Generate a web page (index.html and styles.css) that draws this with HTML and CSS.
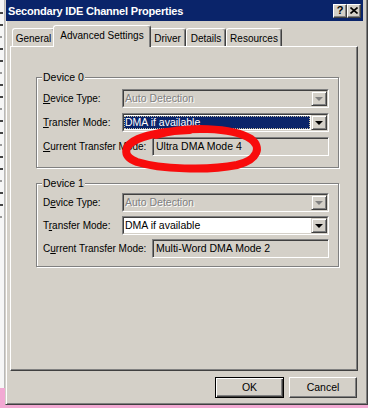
FILE: index.html
```html
<!DOCTYPE html>
<html lang="en">
<head>
    <meta charset="UTF-8">
    <title>Secondary IDE Channel Properties</title>
    <link rel="stylesheet" href="styles.css">
</head>
<body>
    <div class="screen">
        <!-- window behind the dialog -->
        <div class="behind">
            <span class="mark"></span><span class="mark"></span><span class="mark"></span>
            <span class="mark"></span><span class="mark"></span><span class="mark"></span>
            <span class="mark"></span><span class="mark"></span><span class="mark"></span>
            <span class="mark"></span><span class="mark"></span><span class="mark"></span>
            <span class="mark"></span><span class="mark"></span><span class="mark"></span>
            <span class="mark"></span><span class="mark"></span><span class="mark"></span>
        </div>

        <div class="dialog">
            <div class="titlebar">
                <span class="title">Secondary IDE Channel Properties</span>
                <div class="title-btns">
                    <span class="tbtn">?</span>
                    <span class="tbtn">
                        <svg width="8" height="7" viewBox="0 0 8 7"><path d="M0.5 0.5 L7.5 6.5 M7.5 0.5 L0.5 6.5" stroke="#000" stroke-width="1.6"/></svg>
                    </span>
                </div>
            </div>

            <div class="tabs">
                <div class="tab tab-general">General</div>
                <div class="tab tab-advanced active">Advanced Settings</div>
                <div class="tab tab-driver">Driver</div>
                <div class="tab tab-details">Details</div>
                <div class="tab tab-resources">Resources</div>
            </div>

            <div class="panel">
                <!-- Device 0 -->
                <div class="group">
                    <div class="legend">Device 0</div>
                    <div class="row">
                        <span class="label"><u>D</u>evice Type:</span>
                        <div class="combo disabled">
                            <div class="combo-in">
                                <span class="field">Auto Detection</span>
                                <span class="drop"><span class="arrow"></span></span>
                            </div>
                        </div>
                    </div>
                    <div class="row">
                        <span class="label"><u>T</u>ransfer Mode:</span>
                        <div class="combo">
                            <div class="combo-in">
                                <span class="field selected">DMA if available</span>
                                <span class="drop"><span class="arrow"></span></span>
                            </div>
                        </div>
                    </div>
                    <div class="row">
                        <span class="label"><u>C</u>urrent Transfer Mode:</span>
                        <div class="readonly">Ultra DMA Mode 4</div>
                    </div>
                </div>

                <!-- Device 1 -->
                <div class="group group-second">
                    <div class="legend">Device 1</div>
                    <div class="row">
                        <span class="label">D<u>e</u>vice Type:</span>
                        <div class="combo disabled">
                            <div class="combo-in">
                                <span class="field">Auto Detection</span>
                                <span class="drop"><span class="arrow"></span></span>
                            </div>
                        </div>
                    </div>
                    <div class="row">
                        <span class="label">T<u>r</u>ansfer Mode:</span>
                        <div class="combo">
                            <div class="combo-in">
                                <span class="field">DMA if available</span>
                                <span class="drop"><span class="arrow"></span></span>
                            </div>
                        </div>
                    </div>
                    <div class="row">
                        <span class="label">C<u>u</u>rrent Transfer Mode:</span>
                        <div class="readonly">Multi-Word DMA Mode 2</div>
                    </div>
                </div>
            </div>

            <div class="buttons">
                <div class="btn default">OK</div>
                <div class="btn">Cancel</div>
            </div>
        </div>

        <!-- red marker drawn over the screenshot -->
        <svg class="scribble" width="368" height="408" viewBox="0 0 368 408">
            <path d="M156 135 C186 126 232 127 251 139 C262 147 258 160 237 165 C207 171 160 169 137 162 C121 156 124 145 138 139 C150 134 168 131 190 130"
                  fill="none" stroke="#f80c0c" stroke-width="8" stroke-linecap="round" stroke-linejoin="round"/>
        </svg>
    </div>
</body>
</html>
```

FILE: styles.css
```css
* {
    margin: 0;
    padding: 0;
    box-sizing: border-box;
}

body {
    background-color: #f2a9d3;
    font-family: "Liberation Sans", Arial, sans-serif;
    font-size: 10px;
    color: #000;
}

.screen {
    position: relative;
    display: flex;
    width: 368px;
    height: 408px;
    overflow: hidden;
    white-space: nowrap;
}

/* Window behind */
.behind {
    width: 5px;
    height: 388px;
    background-color: #f6f6f6;
    border-right: 1px solid #b8b8b8;
    display: flex;
    flex-direction: column;
    gap: 10px;
    padding-top: 12px;
}

.mark {
    width: 3px;
    height: 2px;
    background-color: #444;
}

.mark:nth-child(3n) {
    background-color: #999;
    width: 2px;
}

/* Dialog frame */
.dialog {
    width: 363px;
    height: 405px;
    background-color: #d4d0c8;
    border-left: 1px solid #d4d0c8;
    border-right: 1px solid #404040;
    border-bottom: 1px solid #404040;
    box-shadow: inset 1px 0 #fff, inset -1px -1px #808080;
    padding-right: 4px;
    display: flex;
    flex-direction: column;
}

.titlebar {
    height: 21px;
    background-color: #0a246a;
    display: flex;
    align-items: center;
    justify-content: space-between;
    padding: 0 2px 0 2px;
}

.title {
    color: #fff;
    font-weight: bold;
    font-size: 11px;
    letter-spacing: -0.2px;
}

.title-btns {
    display: flex;
}

.tbtn {
    width: 14px;
    height: 14px;
    background-color: #d4d0c8;
    border: 1px solid;
    border-color: #fff #404040 #404040 #fff;
    box-shadow: inset -1px -1px #808080;
    display: flex;
    align-items: center;
    justify-content: center;
    font-weight: bold;
    font-size: 11px;
    line-height: 1;
}

/* Tabs */
.tabs {
    display: flex;
    align-items: flex-end;
    height: 25px;
    padding-left: 6px;
}

.tab {
    height: 18px;
    border-top: 1px solid #fff;
    border-left: 1px solid #fff;
    border-right: 1px solid #404040;
    box-shadow: inset -1px 0 #808080;
    border-radius: 3px 3px 0 0;
    text-align: center;
    line-height: 17px;
    padding-top: 1px;
}

.tab-general { width: 43px; }
.tab-driver { width: 37px; }
.tab-details { width: 40px; }
.tab-resources { width: 56px; }

.tab.active {
    width: 98px;
    height: 22px;
    margin: 0 -2px -1px;
    position: relative;
    z-index: 1;
    background-color: #d4d0c8;
    line-height: 18px;
}

/* Panel */
.panel {
    margin: 0 5px 0 4px;
    height: 325px;
    border: 1px solid;
    border-color: #fff #404040 #404040 #fff;
    box-shadow: inset -1px -1px #808080;
    padding: 30px 18px 0 25px;
}

.group {
    display: flex;
    flex-direction: column;
    border: 1px solid #808080;
    box-shadow: inset 1px 1px #fff, 1px 1px 0 #fff;
    padding: 0 9px 11px 6px;
}

.group-second {
    margin-top: 15px;
    padding-bottom: 8px;
}

.group-second .row {
    margin-top: 4px;
}

.group-second .row:nth-child(2) {
    margin-top: 3px;
}

.legend {
    align-self: flex-start;
    margin: -8px 0 0 -1px;
    padding: 0 1px;
    line-height: 14px;
    font-size: 10.5px;
    background-color: #d4d0c8;
}

.row {
    display: flex;
    align-items: center;
    justify-content: space-between;
    height: 19px;
    margin-top: 5px;
}

.label {
    flex-shrink: 0;
}

/* Combo box */
.combo {
    flex-shrink: 0;
    width: 207px;
    height: 19px;
    border: 1px solid;
    border-color: #808080 #fff #fff #808080;
}

.combo-in {
    height: 100%;
    display: flex;
    border: 1px solid;
    border-color: #404040 #d4d0c8 #d4d0c8 #404040;
    background-color: #fff;
}

.field {
    flex: 1;
    padding-left: 1px;
    line-height: 15px;
    font-size: 10.5px;
}

.field.selected {
    margin: 1px 1px 1px 0;
    line-height: 13px;
    background-color: #0a246a;
    color: #fff;
    outline: 1px dotted #c8c0a0;
    outline-offset: -1px;
}

.drop {
    width: 16px;
    height: 15px;
    background-color: #d4d0c8;
    border: 1px solid;
    border-color: #d4d0c8 #404040 #404040 #d4d0c8;
    box-shadow: inset 1px 1px #fff, inset -1px -1px #808080;
    display: flex;
    align-items: center;
    justify-content: center;
}

.arrow {
    width: 0;
    height: 0;
    border-left: 4px solid transparent;
    border-right: 4px solid transparent;
    border-top: 4px solid #000;
}

.combo.disabled .combo-in {
    background-color: #d4d0c8;
}

.combo.disabled .field {
    color: #808080;
    text-shadow: 1px 1px #fff;
}

.combo.disabled .arrow {
    border-top-color: #808080;
}

/* Read-only text */
.readonly {
    flex-shrink: 0;
    width: 177px;
    height: 19px;
    border: 1px solid;
    border-color: #808080 #fff #fff #808080;
    box-shadow: inset 1px 1px #404040, inset -1px -1px #d4d0c8;
    background-color: #d4d0c8;
    padding-left: 3px;
    line-height: 17px;
    font-size: 10.5px;
}

/* Bottom buttons */
.buttons {
    display: flex;
    justify-content: flex-end;
    gap: 5px;
    margin: 6px 6px 0 0;
}

.btn {
    width: 68px;
    height: 21px;
    border: 1px solid;
    border-color: #fff #404040 #404040 #fff;
    box-shadow: inset -1px -1px #808080;
    text-align: center;
    line-height: 19px;
    font-size: 10.5px;
}

.btn.default {
    width: 69px;
    border: 1px solid #000;
    box-shadow: inset 1px 1px #fff, inset -1px -1px #404040, inset -2px -2px #808080;
}

/* Marker overlay */
.scribble {
    position: absolute;
    left: 0;
    top: 0;
    pointer-events: none;
}
```
